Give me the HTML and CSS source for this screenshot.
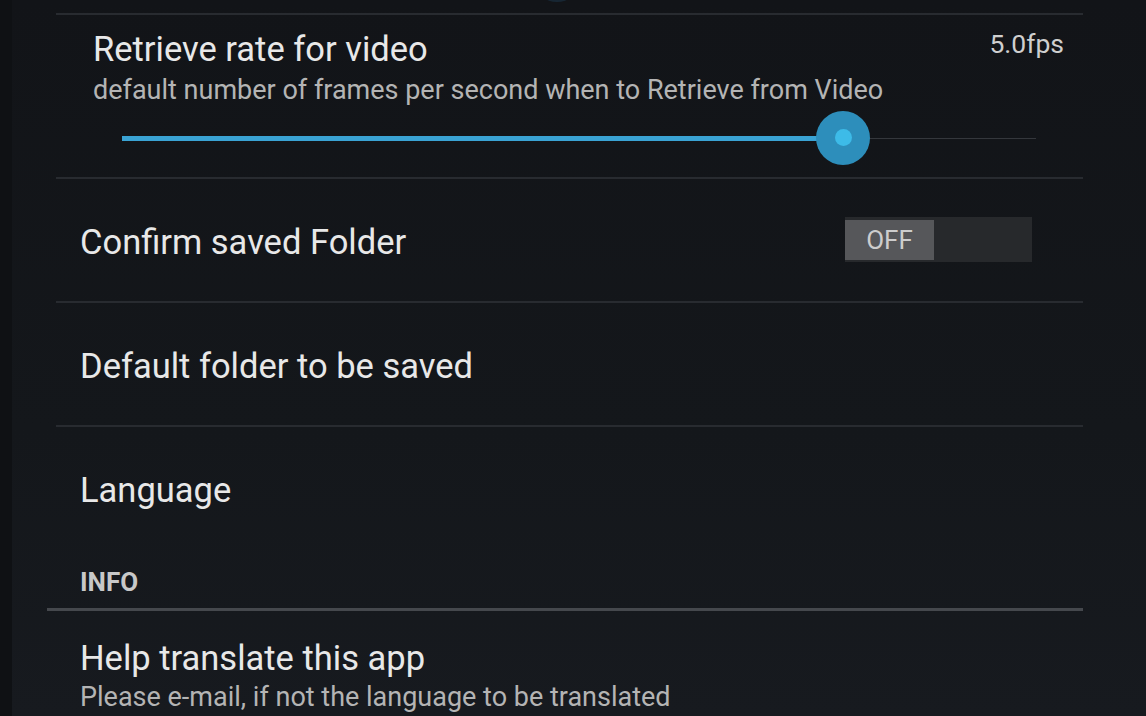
FILE: index.html
```html
<!DOCTYPE html>
<html>
<head>
<meta charset="utf-8">
<link rel="stylesheet" href="styles.css">
</head>
<body>
<div class="screen">
  <div class="top-gap"><span class="prev-thumb"></span></div>
  <div class="list">
    <div class="divider"></div>
    <div class="item slider-item">
      <div class="head">
        <div class="title">Retrieve rate for video</div>
        <div class="value">5.0fps</div>
      </div>
      <div class="summary">default number of frames per second when to Retrieve from Video</div>
      <div class="seek">
        <div class="seek-track">
          <div class="seek-fill" style="width:78.9%"></div>
          <div class="seek-thumb" style="left:78.9%"><span class="seek-dot"></span></div>
        </div>
      </div>
    </div>
    <div class="divider"></div>
    <div class="item row">
      <div class="title">Confirm saved Folder</div>
      <div class="toggle"><span class="toggle-off">OFF</span></div>
    </div>
    <div class="divider"></div>
    <div class="item row">
      <div class="title">Default folder to be saved</div>
    </div>
    <div class="divider"></div>
    <div class="item row">
      <div class="title">Language</div>
    </div>
  </div>
  <div class="category">
    <div class="category-title">INFO</div>
    <div class="category-line"></div>
  </div>
  <div class="list">
    <div class="item two-line">
      <div class="title">Help translate this app</div>
      <div class="summary">Please e-mail, if not the language to be translated</div>
    </div>
  </div>
</div>
</body>
</html>
```
FILE: styles.css
```css
html, body {
  margin: 0;
  padding: 0;
  background: #131519;
  overflow: hidden;
}
body {
  width: 1146px;
  height: 716px;
  font-family: Roboto, "Noto Sans", sans-serif;
  color: #e6e6e6;
}
.screen {
  width: 1146px;
  height: 716px;
  background: linear-gradient(180deg, #121418 0%, #14171b 60%, #171a1f 100%);
  border-left: 12px solid #0f1114;
  box-sizing: border-box;
  position: relative;
  overflow: hidden;
}
.top-gap {
  height: 13px;
  position: relative;
}
.prev-thumb {
  position: absolute;
  left: 524px;
  top: -32px;
  width: 42px;
  height: 34px;
  border-radius: 50%;
  background: rgba(40, 105, 150, 0.22);
}
.list {
  margin-left: 44px;
  width: 1027px;
}
.divider {
  height: 2px;
  background: #282b30;
}
.item {
  box-sizing: border-box;
}
.title {
  font-size: 34.5px;
  line-height: 40px;
  color: #e8e8e8;
}
.summary {
  font-size: 27px;
  line-height: 32px;
  color: #b4b4b4;
}
.slider-item {
  height: 162px;
  padding: 14px 19px 0 37px;
}
.head {
  display: flex;
  justify-content: space-between;
  align-items: flex-start;
}
.value {
  font-size: 26.5px;
  line-height: 30px;
  color: #cfcfcf;
}
.slider-item .summary {
  margin-top: 5px;
}
.seek {
  margin: 5px 28px 0 29px;
  height: 54px;
  display: flex;
  align-items: center;
}
.seek-track {
  position: relative;
  flex: 1;
  height: 1px;
  background: #34373c;
}
.seek-fill {
  position: absolute;
  left: 0;
  top: -2px;
  height: 5px;
  background: #3aa3d4;
}
.seek-thumb {
  position: absolute;
  top: 0;
  width: 54px;
  height: 54px;
  margin: -27px 0 0 -27px;
  border-radius: 50%;
  background: #2d8ebb;
  display: flex;
  align-items: center;
  justify-content: center;
}
.seek-dot {
  width: 17px;
  height: 17px;
  border-radius: 50%;
  background: #3dbbe8;
}
.row {
  height: 122px;
  padding: 4px 51px 0 24px;
  display: flex;
  align-items: center;
  justify-content: space-between;
}
.toggle {
  width: 187px;
  height: 45px;
  margin-bottom: 5px;
  background: #27292c;
  display: flex;
  align-items: center;
}
.toggle-off {
  width: 89px;
  height: 40px;
  background: #56575a;
  color: #cdcdcd;
  font-size: 26px;
  line-height: 40px;
  text-align: center;
}
.category {
  margin-left: 35px;
  width: 1036px;
}
.category-title {
  height: 59px;
  box-sizing: border-box;
  padding: 18px 0 0 33px;
  font-size: 26px;
  line-height: 30px;
  font-weight: bold;
  color: #c8c8c8;
}
.category-line {
  height: 3px;
  background: #45484d;
}
.two-line {
  padding: 27px 24px 0 24px;
}
.two-line .summary {
  margin-top: 3px;
}
```
